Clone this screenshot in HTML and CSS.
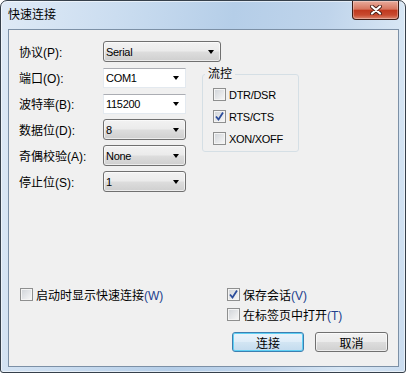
FILE: index.html
```html
<!DOCTYPE html>
<html lang="zh-CN">
<head>
    <meta charset="UTF-8">
    <title>快速连接</title>
    <link rel="stylesheet" href="styles.css">
</head>
<body>
<div class="window">
    <div class="titlebar">
        <span class="title">快速连接</span>
        <div class="close">
            <svg width="12" height="10" viewBox="0 0 12 10">
                <path d="M2 1.5 L10 8.5 M10 1.5 L2 8.5" stroke="#4a2018" stroke-width="4" stroke-linecap="round"/>
                <path d="M2 1.5 L10 8.5 M10 1.5 L2 8.5" stroke="#ffffff" stroke-width="2.2" stroke-linecap="round"/>
            </svg>
        </div>
    </div>
    <div class="client">
        <div class="row proto">
            <span class="lbl">协议(P):</span>
            <div class="combo list wide"><span class="en">Serial</span><i class="arrow"></i></div>
        </div>
        <div class="main">
            <div class="rows">
                <div class="row">
                    <span class="lbl">端口(O):</span>
                    <div class="combo edit"><span class="en">COM1</span><i class="arrow"></i></div>
                </div>
                <div class="row">
                    <span class="lbl">波特率(B):</span>
                    <div class="combo edit"><span class="en">115200</span><i class="arrow"></i></div>
                </div>
                <div class="row">
                    <span class="lbl">数据位(D):</span>
                    <div class="combo list"><span class="en">8</span><i class="arrow"></i></div>
                </div>
                <div class="row">
                    <span class="lbl">奇偶校验(A):</span>
                    <div class="combo list"><span class="en">None</span><i class="arrow"></i></div>
                </div>
                <div class="row">
                    <span class="lbl">停止位(S):</span>
                    <div class="combo list"><span class="en">1</span><i class="arrow"></i></div>
                </div>
            </div>
            <fieldset class="flow">
                <legend>流控</legend>
                <label class="chk"><span class="box"></span><span class="en">DTR/DSR</span></label>
                <label class="chk checked"><span class="box"><svg width="11" height="11" viewBox="0 0 11 11"><path d="M2 5.5 L4.5 8.5 L9 1.5" fill="none" stroke="#2b4c9b" stroke-width="1.8"/></svg></span><span class="en">RTS/CTS</span></label>
                <label class="chk"><span class="box"></span><span class="en">XON/XOFF</span></label>
            </fieldset>
        </div>
        <div class="bottom">
            <div class="opts">
                <label class="chk left"><span class="box"></span><span>启动时显示快速连接<span class="mn">(W)</span></span></label>
                <div class="right">
                    <label class="chk checked"><span class="box"><svg width="11" height="11" viewBox="0 0 11 11"><path d="M2 5.5 L4.5 8.5 L9 1.5" fill="none" stroke="#2b4c9b" stroke-width="1.8"/></svg></span><span>保存会话<span class="mn">(V)</span></span></label>
                    <label class="chk"><span class="box"></span><span>在标签页中打开<span class="mn">(T)</span></span></label>
                </div>
            </div>
            <div class="buttons">
                <button class="btn default">连接</button>
                <button class="btn cancel">取消</button>
            </div>
        </div>
    </div>
</div>
</body>
</html>
```

FILE: styles.css
```css
body {
    margin: 0;
    font-family: "Liberation Sans", "Noto Sans CJK SC", sans-serif;
    font-size: 12px;
    color: #000;
}

.window {
    width: 406px;
    height: 373px;
    box-sizing: border-box;
    border: 1px solid #36404b;
    border-radius: 7px 7px 3px 3px;
    background: linear-gradient(100deg, #dfeaf6 0%, #cbddf0 25%, #b5cee8 50%, #bfd4eb 70%, #d7e6f4 86%, #cadcef 100%);
    box-shadow: inset 0 0 0 1px rgba(255, 255, 255, 0.55);
    display: flex;
    flex-direction: column;
    overflow: hidden;
}

.titlebar {
    height: 28px;
    flex-shrink: 0;
    display: flex;
    justify-content: space-between;
    align-items: flex-start;
}

.title {
    line-height: 28px;
    padding-left: 7px;
}

.close {
    width: 47px;
    height: 19px;
    box-sizing: border-box;
    margin-right: 6px;
    border: 1px solid #3e1c15;
    border-top: none;
    border-radius: 0 0 4px 4px;
    background: linear-gradient(#e8ab9c, #d7765f 45%, #c0391f 52%, #c84a2f 78%, #dc8770);
    box-shadow: inset 0 0 0 1px rgba(255, 255, 255, 0.3);
    display: flex;
    align-items: center;
    justify-content: center;
}

.client {
    flex: 1;
    margin: 0 6px 5px 7px;
    border: 1px solid #7c90a6;
    background: #f0f0f0;
    display: flex;
    flex-direction: column;
    padding: 11px 10px 14px 10px;
}

.row {
    display: flex;
    align-items: center;
    height: 21px;
}

.proto {
    margin-bottom: 5px;
}

.lbl {
    width: 84px;
    flex-shrink: 0;
}

.en {
    font-size: 11px;
    letter-spacing: -0.3px;
}

.combo {
    width: 83px;
    height: 21px;
    box-sizing: border-box;
    display: flex;
    align-items: center;
    justify-content: space-between;
    padding: 0 6px 0 2px;
}

.combo.wide {
    width: 118px;
}

.combo.list {
    border: 1px solid #707070;
    border-radius: 3px;
    background: linear-gradient(#f2f2f2, #ebebeb 48%, #dddddd 52%, #cfcfcf);
    box-shadow: inset 0 0 0 1px rgba(255, 255, 255, 0.6);
}

.combo.edit {
    height: 20px;
    border: 1px solid #e3e9ef;
    border-top-color: #abadb3;
    background: #fff;
}

.arrow {
    width: 0;
    height: 0;
    border-left: 3.5px solid transparent;
    border-right: 3.5px solid transparent;
    border-top: 4px solid #000;
}

.main {
    display: flex;
    align-items: flex-start;
}

.rows {
    display: flex;
    flex-direction: column;
    gap: 5px;
}

.flow {
    width: 97px;
    box-sizing: border-box;
    margin: 0 0 0 16px;
    padding: 7px 6px 6px 10px;
    border: 1px solid #d5dfe5;
    border-radius: 3px;
    display: flex;
    flex-direction: column;
    gap: 9px;
}

.flow legend {
    margin-left: -8px;
    padding: 0 3px;
    line-height: 14px;
}

.chk {
    display: flex;
    align-items: center;
    height: 13px;
    gap: 3px;
    white-space: nowrap;
}

.box {
    width: 13px;
    height: 13px;
    box-sizing: border-box;
    flex-shrink: 0;
    border: 1px solid #8e8f8f;
    background: linear-gradient(135deg, #cfd3d8, #f8f8f8);
    box-shadow: inset 0 0 0 1px #f4f4f4;
    display: flex;
    align-items: center;
    justify-content: center;
}

.mn {
    color: #22408d;
}

.bottom {
    margin-top: auto;
}

.opts {
    display: grid;
    grid-template-columns: 208px 1fr;
}

.chk.left {
    margin-left: 1px;
}

.right {
    display: flex;
    flex-direction: column;
    gap: 7px;
}

.buttons {
    display: flex;
    justify-content: flex-end;
    gap: 11px;
    margin-top: 11px;
}

.btn {
    height: 20px;
    width: 73px;
    margin: 0;
    padding: 0;
    font: inherit;
    border: 1px solid #707070;
    border-radius: 3px;
    background: linear-gradient(#f2f2f2, #ebebeb 48%, #dddddd 52%, #cfcfcf);
    box-shadow: inset 0 0 0 1px rgba(255, 255, 255, 0.6);
}

.btn.default {
    width: 72px;
    border-color: #3c7fb1;
    background: linear-gradient(#ebf4fb, #dfedf8 48%, #d2e5f3 52%, #c3dbee);
    box-shadow: inset 0 0 0 1px #5fd0f4;
}
```
